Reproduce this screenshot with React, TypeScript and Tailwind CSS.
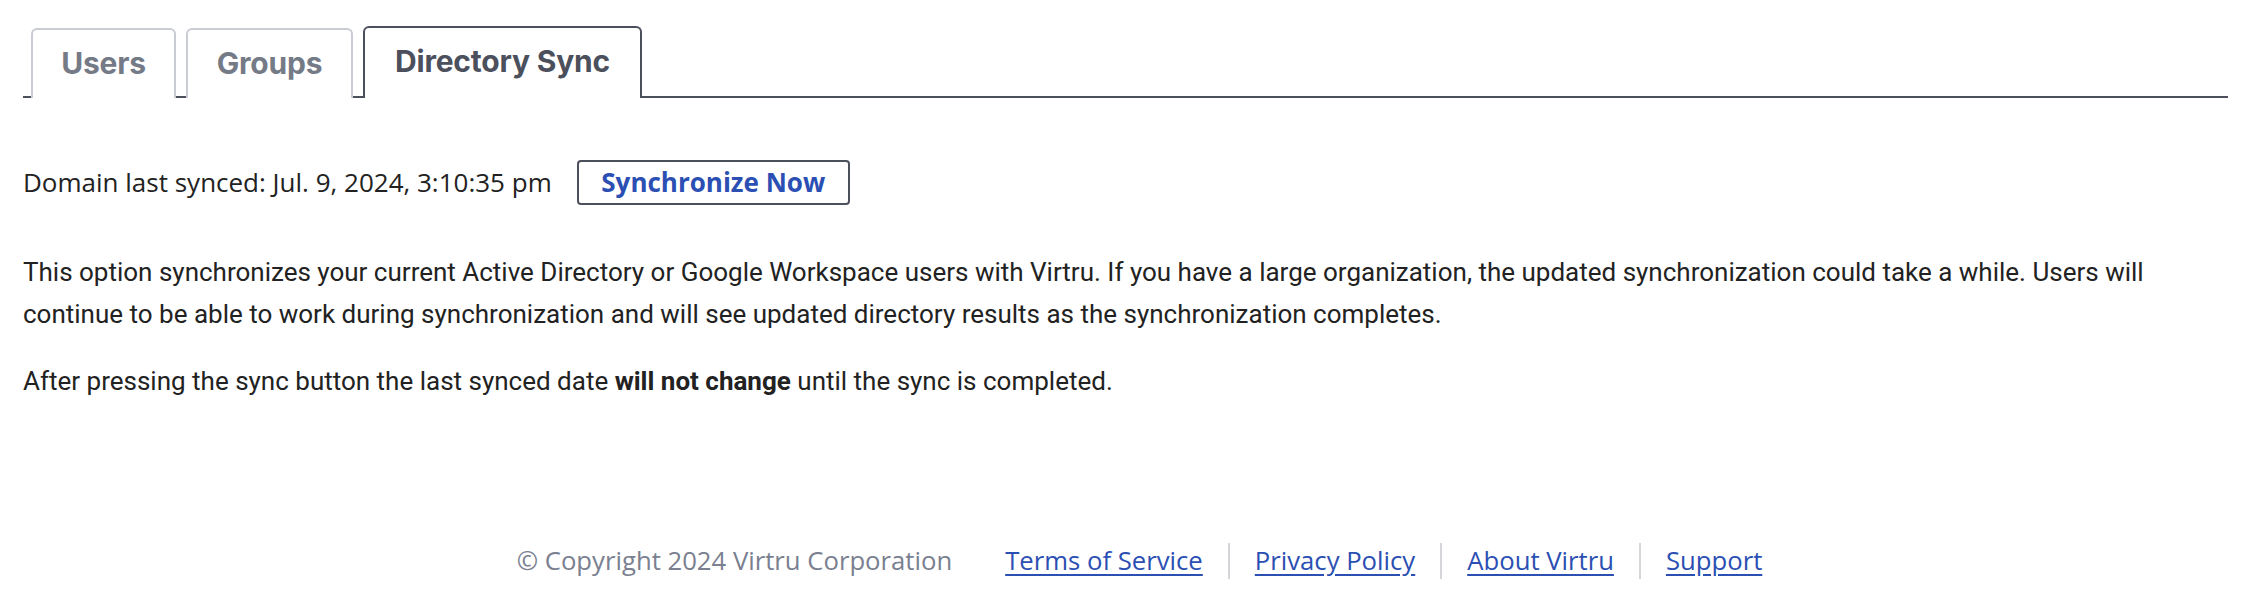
import React from "react";

const tabFont = { fontFamily: "Inter, Lato, sans-serif" };

export default function App() {
  return (
    <div className="min-h-[604px] w-full bg-white pl-[23px] pr-[24px] pt-[26px]">
      {/* Tabs */}
      <div className="flex items-end gap-[10px] border-b-2 border-[#4b505c] pl-[8px]">
        <div
          className="-mb-[2px] flex h-[70px] w-[145px] items-center justify-center rounded-t-[6px] border-2 border-b-0 border-[#c9ccd3] bg-white pb-[2px] text-[30px] font-bold tracking-[-0.2px] text-[#757a87]"
          style={tabFont}
        >
          Users
        </div>
        <div
          className="-mb-[2px] flex h-[70px] w-[167px] items-center justify-center rounded-t-[6px] border-2 border-b-0 border-[#c9ccd3] bg-white pb-[2px] text-[30px] font-bold tracking-[-0.2px] text-[#757a87]"
          style={tabFont}
        >
          Groups
        </div>
        <div
          className="-mb-[2px] flex h-[72px] w-[279px] items-center justify-center rounded-t-[6px] border-2 border-b-0 border-[#4b505c] bg-white pb-[4px] text-[30px] font-bold tracking-[-0.2px] text-[#4b505c]"
          style={tabFont}
        >
          Directory Sync
        </div>
      </div>

      {/* Sync row */}
      <div className="mt-[62px] flex items-center font-['Open_Sans',sans-serif]">
        <span className="text-[26px] text-[#222222]">Domain last synced: Jul. 9, 2024, 3:10:35 pm</span>
        <button className="ml-[25px] flex h-[45px] w-[273px] items-center justify-center rounded-[4px] border-2 border-[#4b505c] bg-white text-[26px] font-bold text-[#2b4fb3]">
          Synchronize Now
        </button>
      </div>

      {/* Description */}
      <div className="mt-[47px] font-['Roboto',sans-serif] text-[26px] leading-[41.6px] text-[#222222]">
        <p>
          This option synchronizes your current Active Directory or Google Workspace users with Virtru. If you have a large
          organization, the updated synchronization could take a while. Users will continue to be able to work during
          synchronization and will see updated directory results as the synchronization completes.
        </p>
        <p className="mt-[26px]">
          After pressing the sync button the last synced date <strong className="font-bold">will not change</strong> until
          the sync is completed.
        </p>
      </div>

      {/* Footer */}
      <div className="mt-[140px] flex h-[36px] items-center justify-center pl-[28px] font-['Open_Sans',sans-serif] text-[25.7px] leading-[36px]">
        <span className="mr-[53px] text-[#7a8090]">© Copyright 2024 Virtru Corporation</span>
        <a href="#" className="pr-[25px] text-[#2b4fb3] underline underline-offset-[4px]">
          Terms of Service
        </a>
        <a href="#" className="border-l-2 border-[#d4d6da] px-[25px] text-[#2b4fb3] underline underline-offset-[4px]">
          Privacy Policy
        </a>
        <a href="#" className="border-l-2 border-[#d4d6da] px-[25px] text-[#2b4fb3] underline underline-offset-[4px]">
          About Virtru
        </a>
        <a href="#" className="border-l-2 border-[#d4d6da] pl-[25px] text-[#2b4fb3] underline underline-offset-[4px]">
          Support
        </a>
      </div>
    </div>
  );
}
